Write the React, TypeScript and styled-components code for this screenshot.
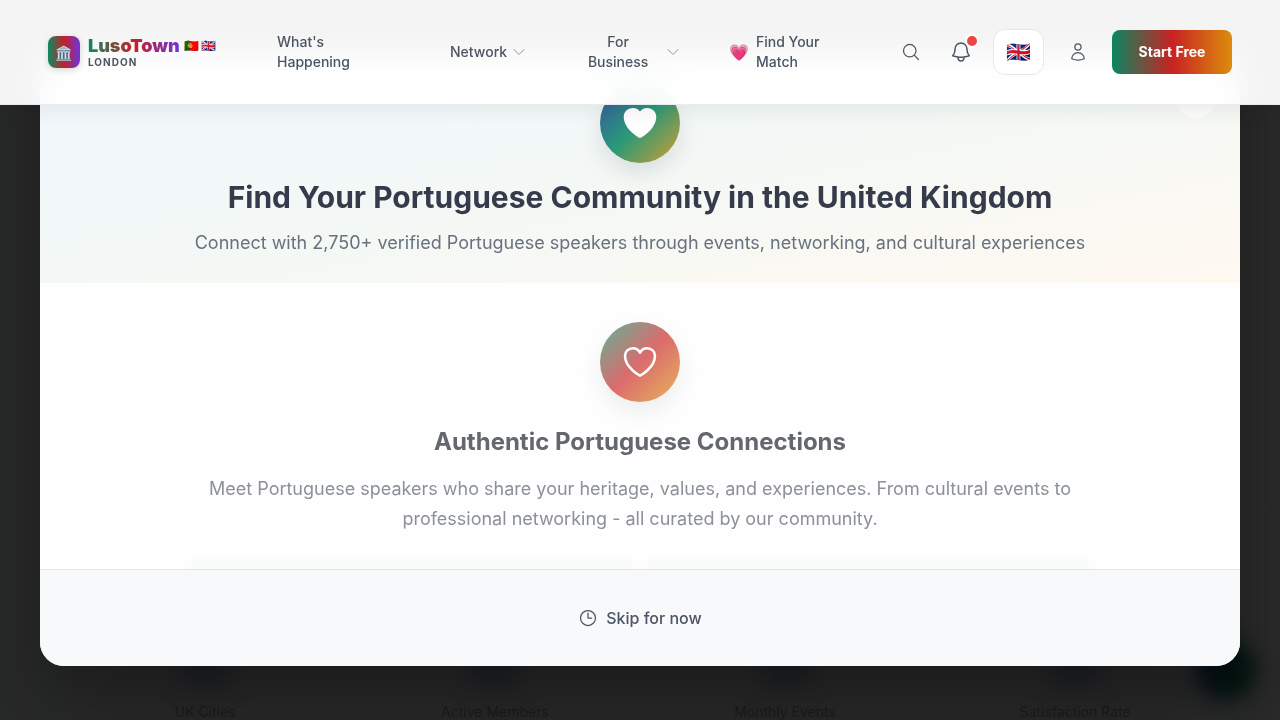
import React from "react";
import styled, { createGlobalStyle } from "styled-components";
import {
  HiOutlineHeart,
  HiHeart,
  HiOutlineMagnifyingGlass,
  HiOutlineBell,
  HiOutlineUser,
  HiOutlineChevronDown,
  HiOutlineClock,
  HiOutlineXMark,
} from "react-icons/hi2";

const GlobalStyle = createGlobalStyle`
  * { box-sizing: border-box; }
  body {
    margin: 0;
    background: #262827;
    font-family: Inter, "Noto Color Emoji", sans-serif;
    color: #4b5563;
  }
  h1, h2, p, ul { margin: 0; padding: 0; }
  button { font-family: inherit; border: 0; padding: 0; background: none; color: inherit; cursor: pointer; }
  a { color: inherit; text-decoration: none; }
`;

const Page = styled.main`
  height: 100vh;
  overflow: hidden;
  display: flex;
  flex-direction: column;
  justify-content: flex-end;
  background: linear-gradient(90deg, #272928, #262626 10%, #262626 90%, #282928);
`;

const Stats = styled.ul`
  list-style: none;
  display: grid;
  grid-template-columns: repeat(4, 1fr);
  padding: 0 60px;
`;

const Stat = styled.li`
  display: flex;
  flex-direction: column;
  align-items: center;
  font-size: 14px;
  line-height: 16px;
  color: #191a1b;
`;

const StatGlow = styled.span`
  width: 48px;
  height: 40px;
  margin-bottom: 16px;
  border-radius: 50%;
  background: #1a1c22;
  filter: blur(12px);
`;

const ChatGlow = styled.span`
  position: fixed;
  right: 24px;
  bottom: 20px;
  width: 60px;
  height: 60px;
  border-radius: 50%;
  background: linear-gradient(90deg, #060b18, #03130f 60%);
  filter: blur(10px);
`;

const Overlay = styled.div`
  position: fixed;
  inset: 0;
  display: flex;
  align-items: center;
  justify-content: center;
  padding: 0 40px;
`;

const Dialog = styled.section`
  position: relative;
  width: 100%;
  max-width: 1200px;
  height: 85vh;
  display: flex;
  flex-direction: column;
  overflow: hidden;
  border-radius: 24px;
  background: #fefefe;
  box-shadow: 0 24px 48px rgba(0, 0, 0, 0.25);
`;

const DialogHead = styled.header`
  display: flex;
  flex-direction: column;
  align-items: center;
  padding: 29px 32px 24px;
  text-align: center;
  background: linear-gradient(to bottom right, #f2f7fd, #f3f8f6 50%, #fff9f1);
`;

const Medallion = styled.div<{ $tone: "ocean" | "sunset" }>`
  display: flex;
  align-items: center;
  justify-content: center;
  width: 80px;
  height: 80px;
  flex: none;
  border-radius: 50%;
  color: #fefefe;
  font-size: 40px;
  background: ${(p) =>
    p.$tone === "ocean"
      ? "linear-gradient(135deg, #3c4ea6, #289a78 50%, #d69c30)"
      : "linear-gradient(135deg, #5cb597, #db6b6d 50%, #e8b458)"};
  box-shadow: 0 10px 24px rgba(0, 0, 0, ${(p) => (p.$tone === "ocean" ? 0.1 : 0.07)});
`;

const Title = styled.h1`
  margin-top: 14px;
  font-size: 30px;
  line-height: 40px;
  font-weight: 700;
  color: #353b4b;
`;

const Subtitle = styled.p`
  margin-top: 10px;
  font-size: 18px;
  line-height: 32px;
  color: #69717e;
`;

const CloseButton = styled.button`
  position: absolute;
  top: 24px;
  right: 24px;
  display: grid;
  place-items: center;
  width: 40px;
  height: 40px;
  border-radius: 50%;
  font-size: 20px;
  color: #9ca3af;
  background: rgba(255, 255, 255, 0.6);
`;

const DialogBody = styled.div`
  flex: 1;
  min-height: 0;
  overflow: hidden;
  display: flex;
  flex-direction: column;
  align-items: center;
  padding: 39px 32px 0;
  text-align: center;
`;

const SlideTitle = styled.h2`
  margin-top: 24px;
  font-size: 24px;
  line-height: 32px;
  font-weight: 700;
  color: #64676e;
`;

const SlideText = styled.p`
  max-width: 900px;
  margin-top: 16px;
  font-size: 18px;
  line-height: 30px;
  color: #8b9099;
`;

const Cards = styled.div`
  display: grid;
  grid-template-columns: 1fr 1fr;
  gap: 12px;
  flex: none;
  width: 100%;
  max-width: 900px;
  margin-top: 23px;
`;

const Card = styled.div`
  height: 72px;
  border-radius: 12px;
  background: #fafcfb;
`;

const DialogFoot = styled.footer`
  display: flex;
  align-items: center;
  justify-content: center;
  height: 97px;
  flex: none;
  border-top: 1px solid #e3e5e8;
  background: #f8f9fb;
`;

const SkipButton = styled.button`
  display: flex;
  align-items: center;
  gap: 8px;
  font-size: 16px;
  line-height: 24px;
  font-weight: 500;
  svg { font-size: 20px; }
`;

const TopBar = styled.header`
  position: fixed;
  top: 0;
  left: 0;
  right: 0;
  display: flex;
  align-items: center;
  height: 105px;
  padding: 0 48px;
  border-bottom: 1px solid rgba(229, 231, 235, 0.8);
  background: rgba(255, 255, 255, 0.95);
  backdrop-filter: blur(16px);
  box-shadow: 0 4px 20px rgba(0, 0, 0, 0.08);
`;

const Brand = styled.a`
  display: flex;
  align-items: center;
  gap: 8px;
  flex: none;
  width: 229px;
`;

const BrandMark = styled.span`
  display: grid;
  place-items: center;
  width: 32px;
  height: 32px;
  border-radius: 8px;
  font-size: 14px;
  background: linear-gradient(90deg, #0a8a60, #c52127 50%, #6d35dc);
  box-shadow: 0 2px 6px rgba(0, 0, 0, 0.15);
`;

const BrandText = styled.span`
  display: flex;
  flex-direction: column;
`;

const BrandLine = styled.span`
  display: flex;
  align-items: center;
  gap: 5px;
  line-height: 20px;
`;

const BrandName = styled.span`
  font-size: 18px;
  font-weight: 900;
  color: transparent;
  background: linear-gradient(90deg, #0a8a60, #c52127 50%, #6d35dc);
  background-clip: text;
`;

const Flags = styled.span`
  display: flex;
  gap: 2px;
  font-size: 12px;
`;

const BrandCity = styled.span`
  font-size: 10px;
  line-height: 12px;
  font-weight: 700;
  letter-spacing: 1px;
`;

const Nav = styled.nav`
  display: flex;
  align-items: center;
  gap: 48px;
  flex: 1;
`;

const navItem = `
  display: flex;
  align-items: center;
  font-size: 14px;
  line-height: 20px;
  font-weight: 500;
`;

const NavLink = styled.a<{ $width?: number }>`
  ${navItem}
  gap: 7px;
  width: ${(p) => (p.$width ? p.$width + "px" : "auto")};
`;

const NavButton = styled.button`
  ${navItem}
  gap: 4px;
  svg { font-size: 16px; color: #8d939d; }
`;

const NavLabel = styled.span<{ $width: number }>`
  width: ${(p) => p.$width}px;
`;

const Emoji = styled.span`
  font-size: 16px;
`;

const Actions = styled.div<{ $gap: number }>`
  display: flex;
  align-items: center;
  flex: none;
  gap: ${(p) => p.$gap}px;
`;

const IconButton = styled.button<{ $width: number; $icon: number }>`
  position: relative;
  display: grid;
  place-items: center;
  width: ${(p) => p.$width}px;
  height: 44px;
  font-size: ${(p) => p.$icon}px;
`;

const Dot = styled.span`
  position: absolute;
  top: 4px;
  right: 2px;
  width: 14px;
  height: 14px;
  border: 2px solid #fff;
  border-radius: 50%;
  background: #ef4444;
`;

const LanguageButton = styled.button`
  width: 51px;
  height: 46px;
  border: 1px solid #e5e7eb;
  border-radius: 12px;
  background: #fff;
  font-size: 20px;
  line-height: 28px;
`;

const StartButton = styled.button`
  width: 120px;
  height: 44px;
  border-radius: 8px;
  font-size: 14px;
  line-height: 20px;
  font-weight: 700;
  color: #fff;
  background: linear-gradient(90deg, #0a8762, #c82222 50%, #dc8c0c);
`;

const stats = ["UK Cities", "Active Members", "Monthly Events", "Satisfaction Rate"];

export default function App() {
  return (
    <>
      <GlobalStyle />
      <Page>
        <Stats>
          {stats.map((label) => (
            <Stat key={label}>
              <StatGlow />
              {label}
            </Stat>
          ))}
        </Stats>
        <ChatGlow />
      </Page>

      <Overlay>
        <Dialog role="dialog" aria-labelledby="welcome-title">
          <DialogHead>
            <Medallion $tone="ocean">
              <HiHeart />
            </Medallion>
            <Title id="welcome-title">Find Your Portuguese Community in the United Kingdom</Title>
            <Subtitle>
              Connect with 2,750+ verified Portuguese speakers through events, networking, and cultural experiences
            </Subtitle>
            <CloseButton aria-label="Close">
              <HiOutlineXMark />
            </CloseButton>
          </DialogHead>
          <DialogBody>
            <Medallion $tone="sunset">
              <HiOutlineHeart />
            </Medallion>
            <SlideTitle>Authentic Portuguese Connections</SlideTitle>
            <SlideText>
              Meet Portuguese speakers who share your heritage, values, and experiences. From cultural events to
              professional networking - all curated by our community.
            </SlideText>
            <Cards>
              <Card />
              <Card />
            </Cards>
          </DialogBody>
          <DialogFoot>
            <SkipButton>
              <HiOutlineClock />
              Skip for now
            </SkipButton>
          </DialogFoot>
        </Dialog>
      </Overlay>

      <TopBar>
        <Brand href="#">
          <BrandMark>🏛️</BrandMark>
          <BrandText>
            <BrandLine>
              <BrandName>LusoTown</BrandName>
              <Flags>
                <span>🇵🇹</span>
                <span>🇬🇧</span>
              </Flags>
            </BrandLine>
            <BrandCity>LONDON</BrandCity>
          </BrandText>
        </Brand>
        <Nav>
          <NavLink href="#" $width={125}>
            What's
            <br />
            Happening
          </NavLink>
          <NavButton>
            Network
            <HiOutlineChevronDown />
          </NavButton>
          <NavButton>
            <NavLabel $width={86}>
              For
              <br />
              Business
            </NavLabel>
            <HiOutlineChevronDown />
          </NavButton>
          <NavLink href="#">
            <Emoji>💗</Emoji>
            <NavLabel $width={80}>Find Your Match</NavLabel>
          </NavLink>
        </Nav>
        <Actions $gap={12}>
          <Actions $gap={10}>
            <IconButton $width={40} $icon={20} aria-label="Search">
              <HiOutlineMagnifyingGlass />
            </IconButton>
            <IconButton $width={40} $icon={24} aria-label="Notifications">
              <HiOutlineBell />
              <Dot />
            </IconButton>
          </Actions>
          <LanguageButton aria-label="Language">🇬🇧</LanguageButton>
          <IconButton $width={44} $icon={20} aria-label="Account">
            <HiOutlineUser />
          </IconButton>
          <StartButton>Start Free</StartButton>
        </Actions>
      </TopBar>
    </>
  );
}
